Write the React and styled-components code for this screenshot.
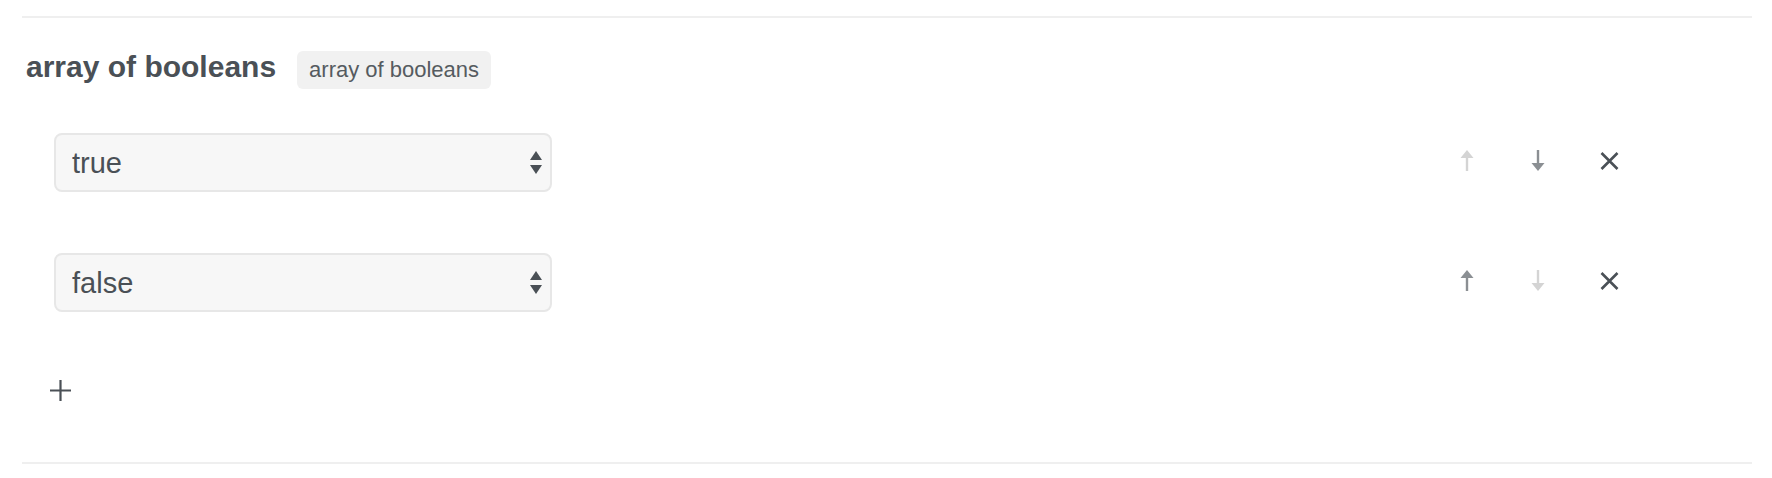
import React from 'react'
import styled, { createGlobalStyle } from 'styled-components'

const GlobalStyle = createGlobalStyle`
    body {
        margin: 0;
        background: #ffffff;
        font-family: "Liberation Sans", Arial, sans-serif;
        color: #4a5056;
    }
`

const Page = styled.div`
    padding: 16px 20px 0 22px;
`

const Divider = styled.hr`
    margin: 0;
    border: 0;
    height: 2px;
    background: #efefef;
`

const Field = styled.section`
    padding: 31px 4px 51px;
`

const Header = styled.div`
    display: flex;
    align-items: baseline;
    gap: 21px;
`

const Title = styled.h2`
    margin: 0;
    font-size: 30px;
    line-height: 36px;
    font-weight: 700;
    color: #4a5056;
`

const Badge = styled.span`
    display: inline-block;
    padding: 6px 12px;
    font-size: 22px;
    line-height: 26px;
    color: #555b60;
    background: #f1f1f1;
    border-radius: 6px;
`

const List = styled.div`
    display: flex;
    flex-direction: column;
    gap: 61px;
    margin-top: 44px;
`

const Row = styled.div`
    display: flex;
    align-items: center;
    padding-left: 28px;
`

const SelectWrap = styled.div`
    position: relative;
    width: 498px;
`

const Select = styled.select`
    appearance: none;
    display: block;
    width: 100%;
    height: 59px;
    box-sizing: border-box;
    padding: 0 40px 0 16px;
    font-family: inherit;
    font-size: 29px;
    color: #4a5056;
    background: #f7f7f7;
    border: 2px solid #e7e7e7;
    border-radius: 8px;
    outline: none;
`

const Caret = styled.svg`
    position: absolute;
    right: 10px;
    top: 50%;
    transform: translateY(-50%);
    pointer-events: none;
`

const Actions = styled.div`
    display: flex;
    gap: 27px;
    margin-left: auto;
    padding: 0 117px 4px 0;
`

const IconButton = styled.button`
    display: flex;
    align-items: center;
    justify-content: center;
    width: 44px;
    height: 40px;
    padding: 0;
    border: 0;
    background: transparent;
    color: ${ props => props.disabled ? '#d4d4d4' : props.tone === 'dark' ? '#4a5056' : '#8b8f93' };
    cursor: ${ props => props.disabled ? 'default' : 'pointer' };
`

const AddButton = styled.button`
    display: flex;
    padding: 10px;
    margin: 58px 0 0 14px;
    border: 0;
    background: transparent;
    color: #4a5056;
    cursor: pointer;
`

const ArrowIcon = ({ down }) => (
    <svg width="14" height="21" viewBox="0 0 14 21" style={ down ? { transform: 'rotate(180deg)' } : null }>
        <polygon points="7,0 13.5,8 0.5,8" fill="currentColor" />
        <rect x="5.8" y="7" width="2.4" height="14" fill="currentColor" />
    </svg>
)

const CloseIcon = () => (
    <svg width="19" height="18" viewBox="0 0 19 18">
        <path d="M1.5 1 L17.5 17 M17.5 1 L1.5 17" stroke="currentColor" strokeWidth="2.6" fill="none" />
    </svg>
)

const PlusIcon = () => (
    <svg width="21" height="21" viewBox="0 0 21 21">
        <path d="M10.5 0 V21 M0 10.5 H21" stroke="currentColor" strokeWidth="2.2" fill="none" />
    </svg>
)

const items = [true, false]

const App = () => (
    <Page>
        <GlobalStyle />
        <Divider />
        <Field>
            <Header>
                <Title>array of booleans</Title>
                <Badge>array of booleans</Badge>
            </Header>

            <List>
                {
                    items.map((value, i) => (
                        <Row key={ i }>
                            <SelectWrap>
                                <Select defaultValue={ String(value) }>
                                    <option value="true">true</option>
                                    <option value="false">false</option>
                                </Select>
                                <Caret width="12" height="24" viewBox="0 0 12 24">
                                    <polygon points="6,0 12,9 0,9" fill="#4a5056" />
                                    <polygon points="0,14 12,14 6,23" fill="#4a5056" />
                                </Caret>
                            </SelectWrap>
                            <Actions>
                                <IconButton disabled={ i === 0 }><ArrowIcon /></IconButton>
                                <IconButton disabled={ i === items.length - 1 }><ArrowIcon down /></IconButton>
                                <IconButton tone="dark"><CloseIcon /></IconButton>
                            </Actions>
                        </Row>
                    ))
                }
            </List>

            <AddButton><PlusIcon /></AddButton>
        </Field>
        <Divider />
    </Page>
)

export default App
